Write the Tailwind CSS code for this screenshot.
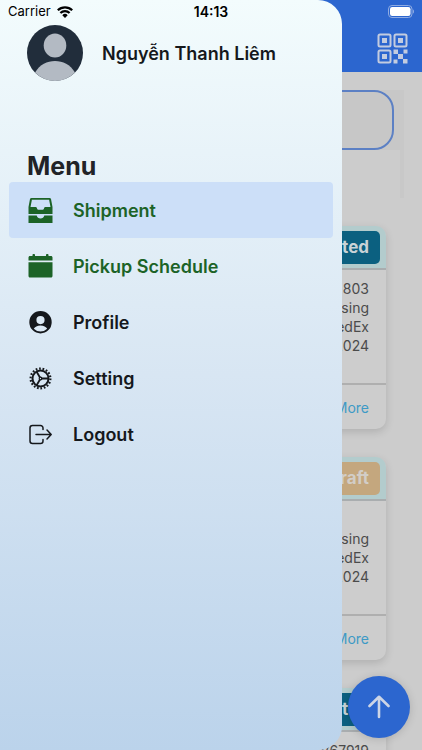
<!DOCTYPE html>
<html lang="vi">
<head>
<meta charset="utf-8">
<meta name="viewport" content="width=device-width, initial-scale=1">
<title>Shipment</title>
<script src="https://cdn.jsdelivr.net/npm/@tailwindcss/browser@4"></script>
</head>
<body class="font-[Inter,'Noto_Sans',sans-serif] text-[#15181c]">
<div class="relative h-screen overflow-hidden bg-[#cccccc]">

  <!-- Shipment list, dimmed behind the drawer -->
  <header class="flex h-18 items-end justify-end bg-[#2c66cf] px-3.5 pb-2">
    <button type="button" aria-label="Scan QR code" class="text-[#c3cce0]">
      <svg class="size-8" viewBox="0 0 32 32" fill="currentColor">
        <g fill="none" stroke="currentColor" stroke-width="2">
          <rect x="2.500" y="2.500" width="12" height="12" rx="1.500"/>
          <rect x="18.500" y="2.500" width="12" height="12" rx="1.500"/>
          <rect x="2.500" y="18.500" width="12" height="12" rx="1.500"/>
        </g>
        <path d="M6 6h5v5H6zM22 6h5v5h-5zM6 22h5v5H6zM17.500 17.500h4.500v4.500h-4.500zM27.500 17.500h4v4h-4zM22 22h5v5h-5zM17.500 27.500h4v4h-4zM27 27h4.500v4.500H27z"/>
      </svg>
    </button>
  </header>

  <main class="pt-[18px] text-sm leading-[19px] text-[#4b4b4b]">
    <div class="mr-[18px] ml-7 h-[108px] border-r-4 border-[#c8c8c8]">
      <div class="bg-[#c7c7c7] pr-1.5">
        <input type="search" aria-label="Search shipments" class="block h-[60px] w-full rounded-[20px] border-2 border-[#5c80c4] px-4">
      </div>
    </div>

    <div class="mx-9 mt-7 flex flex-col gap-7">
      <article class="overflow-hidden rounded-[10px] bg-[#cdcdcd] shadow-[0_3px_8px_rgba(0,0,0,0.14)]">
        <div class="flex h-11 items-start justify-end border-b-2 border-[#a9adaf] bg-[#b3cccd] px-1.5 pt-[5px]">
          <span class="rounded-[5px] bg-[#0b6080] px-[11px] py-1.5 text-[17px] leading-[21px] font-bold text-[#c9d3d7]">Created</span>
        </div>
        <div class="flex h-[113px] flex-col items-end px-[17px] pt-[9px]">
          <p>803</p><p>Processing</p><p>FedEx</p><p>2024</p>
        </div>
        <div class="flex h-[46px] items-center justify-end border-t-2 border-[#afafaf] px-[17px]">
          <a href="#" class="text-[#3d9ac6]">More</a>
        </div>
      </article>

      <article class="overflow-hidden rounded-[10px] bg-[#cdcdcd] shadow-[0_3px_8px_rgba(0,0,0,0.14)]">
        <div class="flex h-11 items-start justify-end border-b-2 border-[#a9adaf] bg-[#b3cccd] px-1.5 pt-[5px]">
          <span class="rounded-[5px] bg-[#c4a77e] px-[11px] py-1.5 text-[17px] leading-[21px] font-bold text-[#d2cdc7]">Draft</span>
        </div>
        <div class="flex h-[113px] flex-col items-end px-[17px] pt-[9px]">
          <p>&nbsp;</p><p>Processing</p><p>FedEx</p><p>2024</p>
        </div>
        <div class="flex h-[46px] items-center justify-end border-t-2 border-[#afafaf] px-[17px]">
          <a href="#" class="text-[#3d9ac6]">More</a>
        </div>
      </article>

      <article class="overflow-hidden rounded-[10px] bg-[#cdcdcd] shadow-[0_3px_8px_rgba(0,0,0,0.14)]">
        <div class="flex h-11 items-start justify-end border-b-2 border-[#a9adaf] bg-[#b3cccd] px-1.5 pt-[5px]">
          <span class="rounded-[5px] bg-[#0b6080] px-[11px] py-1.5 text-[17px] leading-[21px] font-bold text-[#c9d3d7]">Created</span>
        </div>
        <div class="flex h-[113px] flex-col items-end px-[17px] pt-[9px]">
          <p>V67919</p>
        </div>
      </article>
    </div>
  </main>

  <button type="button" aria-label="Back to top" class="absolute right-3 bottom-3 flex size-[62px] items-center justify-center rounded-full bg-[#2c66cf] text-[#cdd5e6] shadow-[0_1px_8px_rgba(0,0,0,0.15)]">
    <svg class="size-6" viewBox="0 0 24 24" fill="none" stroke="currentColor" stroke-width="2.600" stroke-linecap="round" stroke-linejoin="round"><path d="M12 22V2M2.500 11 12 1.800 21.500 11"/></svg>
  </button>

  <!-- Drawer -->
  <aside class="absolute inset-y-0 left-0 w-[81%] rounded-r-3xl bg-linear-to-b from-[#f3fcfd] via-[#d8e6f3] to-[#bbd3eb] pt-[25px]">
    <div class="flex items-center gap-[19px] pl-[27px]">
      <svg class="size-14 shrink-0" viewBox="0 0 56 56" role="img" aria-label="Avatar">
        <circle cx="28" cy="28" r="28" fill="#212d3b"/>
        <ellipse cx="28" cy="20.500" rx="11.300" ry="12" fill="#b3bac3"/>
        <path d="M8 47.500C13 39.500 20 36 28 36s15 3.500 20 11.500A28 28 0 0 1 8 47.500Z" fill="#b3bac3"/>
      </svg>
      <p class="pt-0.5 text-lg font-semibold">Nguyễn Thanh Liêm</p>
    </div>
    <h1 class="mt-[70px] pl-[27px] text-[25px] leading-[31px] font-bold text-[#212327]">Menu</h1>
    <nav class="px-[9px] text-lg font-semibold">
      <a href="#" aria-current="page" class="flex h-14 items-center gap-[19px] rounded bg-[#ccdff8] pt-0.5 pl-[19px] text-[#1c6327]">
        <svg class="size-[26px]" viewBox="0 0 26 26" fill="currentColor">
          <path fill-rule="evenodd" d="M3.500 0h18c.8 0 1.300.4 1.500 1.100L24.500 9v7H.5V9L2 1.100C2.200.4 2.700 0 3.500 0ZM3.900 1.800 2.500 9h5.200c.6 0 1 .4 1.200 1l.3.900c.2.500.6.800 1.100.800h4.400c.5 0 .9-.3 1.100-.8l.3-.9c.2-.6.600-1 1.200-1h5.200l-1.400-7.200Z"/>
          <path d="M.5 17.500h8.200c.4 1.900 1.900 3 3.800 3s3.400-1.100 3.800-3h8.200v7.500H.5Z"/>
        </svg>
        Shipment
      </a>
      <a href="#" class="flex h-14 items-center gap-[19px] rounded pt-0.5 pl-[19px] text-[#1c6327]">
        <svg class="size-[26px]" viewBox="0 0 26 26" fill="currentColor">
          <path d="M.5 6.500V3.500C.5 2.600 1.100 2 2 2h2.500V.9c0-.5.300-.9.800-.9h.9c.5 0 .8.400.8.900V2h11V.9c0-.5.300-.9.800-.9h.9c.5 0 .8.400.8.900V2H23c.9 0 1.500.6 1.500 1.500v3ZM.5 8.300h24v13.700c0 .9-.6 1.500-1.500 1.500H2C1.100 23.500.5 22.900.5 22Z"/>
        </svg>
        Pickup Schedule
      </a>
      <a href="#" class="flex h-14 items-center gap-[19px] rounded pt-0.5 pl-[19px]">
        <svg class="size-[26px]" viewBox="0 0 26 26" fill="currentColor">
          <path fill-rule="evenodd" d="M12.500 1a11.200 11.200 0 1 1 0 22.400 11.200 11.200 0 0 1 0-22.400Zm0 5a4.100 4.100 0 1 0 0 8.200 4.100 4.100 0 0 0 0-8.200Zm0 9.400c-3.200 0-5.700 1.300-6.700 3.300a9.400 9.400 0 0 0 13.400 0c-1-2-3.500-3.300-6.700-3.300Z"/>
        </svg>
        Profile
      </a>
      <a href="#" class="flex h-14 items-center gap-[19px] rounded pt-0.5 pl-[19px]">
        <svg class="size-[26px]" viewBox="0.500 0.500 26 26" fill="none" stroke="currentColor">
          <circle cx="13" cy="13" r="8" stroke-width="2"/>
          <circle cx="13" cy="13" r="9.900" stroke-width="2.200" stroke-dasharray="1.730 1.726"/>
          <path d="M21 13h-7.500M9 6l3.600 6.300M9 20l3.600-6.300" stroke-width="1.800"/>
          <circle cx="13" cy="13" r="1.300" stroke-width="1.200"/>
        </svg>
        Setting
      </a>
      <a href="#" class="flex h-14 items-center gap-[19px] rounded pt-0.5 pl-[19px]">
        <svg class="size-[26px]" viewBox="0.500 0.500 26 26" fill="none" stroke="currentColor" stroke-width="1.500" stroke-linecap="round" stroke-linejoin="round">
          <path d="M15.500 8V6.500A2.500 2.500 0 0 0 13 4H5a2.500 2.500 0 0 0-2.500 2.500v13A2.500 2.500 0 0 0 5 22h8a2.500 2.500 0 0 0 2.500-2.500V18M8.500 13h15M19.500 8.500 23.700 13l-4.200 4.500"/>
        </svg>
        Logout
      </a>
    </nav>
  </aside>

  <!-- Status bar -->
  <div class="absolute inset-x-0 top-0 grid h-6 grid-cols-3 items-center px-2 text-[13px] text-black">
    <div class="flex items-center gap-1.5">
      <span>Carrier</span>
      <svg class="h-3 w-4" viewBox="0 0 16 12" fill="none" stroke="currentColor" stroke-width="2.200">
        <path d="M.8 4.300a10.200 10.200 0 0 1 14.400 0M3.400 7a6.500 6.500 0 0 1 9.200 0"/>
        <path d="M8 12 5.300 9.200a3.800 3.800 0 0 1 5.400 0Z" fill="currentColor" stroke="none"/>
      </svg>
    </div>
    <time class="text-center text-sm font-semibold">14:13</time>
    <svg class="h-3.5 w-7 justify-self-end" viewBox="-2 0 28 14" role="img" aria-label="Battery full">
      <rect x=".5" y=".5" width="23.500" height="12" rx="3.500" fill="none" stroke="#8fabe2"/>
      <rect x="2" y="2" width="20.500" height="9" rx="2.200" fill="#fff"/>
      <path d="M25 4.500c.7.300 1 1 1 2s-.3 1.700-1 2Z" fill="#8fabe2"/>
    </svg>
  </div>
</div>
</body>
</html>
